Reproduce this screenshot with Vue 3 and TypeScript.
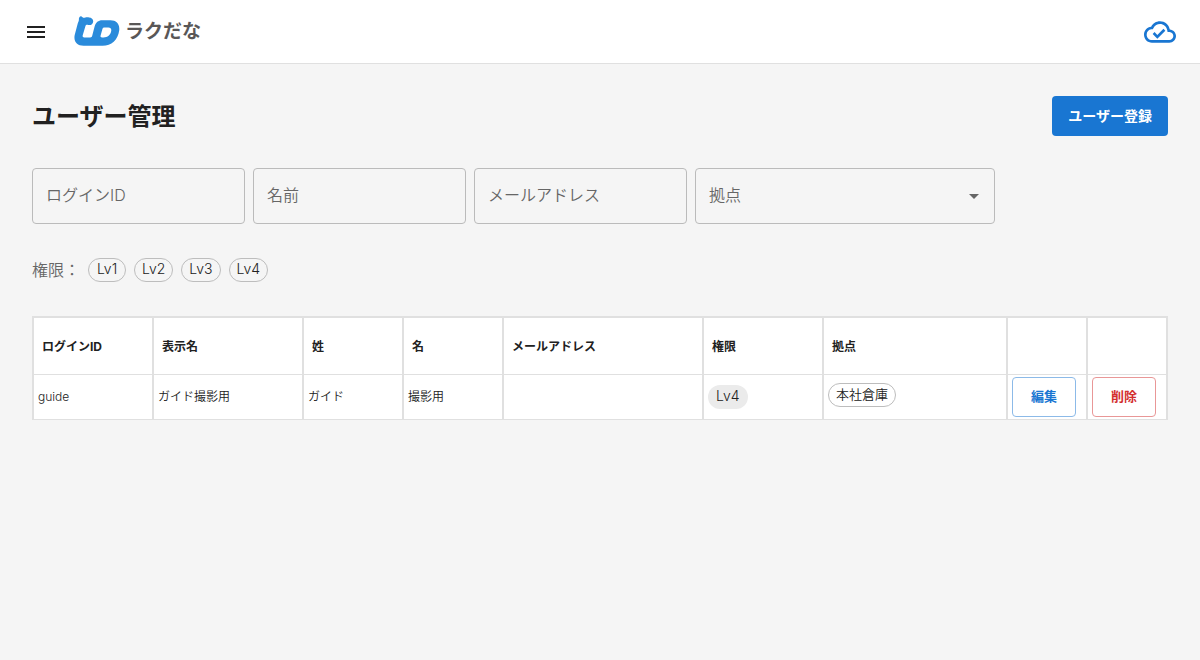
<script setup lang="ts">
import { ref } from 'vue'

interface User {
  loginId: string
  displayName: string
  lastName: string
  firstName: string
  email: string
  level: string
  bases: string[]
}

const textFilters = ref([
  { id: 'login-id', label: 'ログインID', value: '' },
  { id: 'name', label: '名前', value: '' },
  { id: 'email', label: 'メールアドレス', value: '' },
])
const base = ref('')
const levels = ['Lv1', 'Lv2', 'Lv3', 'Lv4']
const selectedLevels = ref<string[]>([])

const columns = [
  { key: 'login', label: 'ログインID' },
  { key: 'display', label: '表示名' },
  { key: 'last', label: '姓' },
  { key: 'first', label: '名' },
  { key: 'email', label: 'メールアドレス' },
  { key: 'level', label: '権限' },
  { key: 'base', label: '拠点' },
  { key: 'edit', label: '' },
  { key: 'delete', label: '' },
]

const users: User[] = [
  {
    loginId: 'guide',
    displayName: 'ガイド撮影用',
    lastName: 'ガイド',
    firstName: '撮影用',
    email: '',
    level: 'Lv4',
    bases: ['本社倉庫'],
  },
]

function toggleLevel(level: string) {
  selectedLevels.value = selectedLevels.value.includes(level)
    ? selectedLevels.value.filter((l) => l !== level)
    : [...selectedLevels.value, level]
}
</script>

<template>
  <div class="page">
    <header class="app-bar">
      <button class="icon-button" type="button" aria-label="メニュー">
        <svg class="menu-icon" viewBox="0 0 24 24"><path d="M3 18h18v-2H3v2zm0-5h18v-2H3v2zm0-7v2h18V6H3z" /></svg>
      </button>
      <a class="brand" href="#">
        <svg class="brand-mark" viewBox="0 0 46 32">
          <path
            fill-rule="evenodd"
            d="M5.4 1.2C6 .1 7.4 -.1 8.3 .9C9 1.6 9.6 1.9 10.6 1.7C12 1.4 13.6 1.3 15 1.4C17.6 1.5 19.3 3.2 19.2 5.4C19 8 16.6 9.6 14.2 8.9C12.6 8.5 11.8 9 11.4 10.2L8.8 19C8.3 20.6 8.8 21.4 10.2 21.4H16.2C17.4 21.4 17.9 21 18.2 19.8L20.6 10.6C21.8 6.4 24.2 4.3 28.2 4.3H36.4C42.6 4.3 46 8.4 45.2 14.4C44 23.6 37.4 29.8 28.6 29.8H9.6C2.8 29.8 -.6 25.4 .7 19L3.6 8C4.1 6.2 4.9 5 4.9 3.8C4.9 2.8 4.8 2 5.4 1.2ZM30.6 11.6C29.2 11.6 28.6 12.1 28.3 13.4L26.6 19.6C26.3 21 26.7 21.4 28 21.4H29.6C33.6 21.4 36.5 19 37.2 15C37.6 12.8 36.6 11.6 34.4 11.6Z"
          />
        </svg>
        <span class="brand-name">ラクだな</span>
      </a>
      <button class="icon-button sync" type="button" aria-label="同期済み">
        <svg class="cloud-icon" viewBox="0 0 24 24">
          <path d="M19.35 10.04C18.67 6.59 15.64 4 12 4 9.11 4 6.6 5.64 5.35 8.04 2.34 8.36 0 10.91 0 14c0 3.31 2.69 6 6 6h13c2.76 0 5-2.24 5-5 0-2.64-2.05-4.78-4.65-4.96zM19 18H6c-2.21 0-4-1.79-4-4 0-2.05 1.53-3.76 3.56-3.97l1.07-.11.5-.95C8.08 7.14 9.94 6 12 6c2.62 0 4.88 1.86 5.39 4.43l.3 1.5 1.53.11c1.56.1 2.78 1.41 2.78 2.96 0 1.65-1.35 3-3 3zm-9-3.82l-2.09-2.09L6.5 13.5 10 17l6.01-6.01-1.41-1.41z" />
        </svg>
      </button>
    </header>

    <main class="content">
      <div class="title-row">
        <h1>ユーザー管理</h1>
        <button class="primary" type="button">ユーザー登録</button>
      </div>

      <form class="filters" @submit.prevent>
        <input
          v-for="f in textFilters"
          :id="f.id"
          :key="f.id"
          v-model="f.value"
          class="field"
          type="text"
          :aria-label="f.label"
          :placeholder="f.label"
        />
        <div class="select-wrap">
          <select id="base" v-model="base" class="field" aria-label="拠点">
            <option value="">拠点</option>
            <option value="head">本社倉庫</option>
          </select>
          <svg class="arrow" viewBox="0 0 24 24"><path d="M7 10l5 5 5-5z" /></svg>
        </div>
      </form>

      <div class="levels" role="group" aria-labelledby="level-label">
        <span id="level-label" class="level-label">権限：</span>
        <button
          v-for="l in levels"
          :key="l"
          class="chip level outlined"
          :class="{ filled: selectedLevels.includes(l) }"
          type="button"
          :aria-pressed="selectedLevels.includes(l)"
          @click="toggleLevel(l)"
        >{{ l }}</button>
      </div>

      <table>
        <colgroup>
          <col v-for="c in columns" :key="c.key" :class="'col-' + c.key" />
        </colgroup>
        <thead>
          <tr>
            <th v-for="c in columns" :key="c.key" scope="col">{{ c.label }}</th>
          </tr>
        </thead>
        <tbody>
          <tr v-for="u in users" :key="u.loginId">
            <td>{{ u.loginId }}</td>
            <td>{{ u.displayName }}</td>
            <td>{{ u.lastName }}</td>
            <td>{{ u.firstName }}</td>
            <td>{{ u.email }}</td>
            <td><div class="chips"><span class="chip level filled">{{ u.level }}</span></div></td>
            <td>
              <div class="chips bases">
                <span v-for="b in u.bases" :key="b" class="chip outlined">{{ b }}</span>
              </div>
            </td>
            <td><button class="action edit" type="button">編集</button></td>
            <td><button class="action delete" type="button">削除</button></td>
          </tr>
        </tbody>
      </table>
    </main>
  </div>
</template>

<style>
body {
  background: #f5f5f5;
}
</style>

<style scoped>
.page {
  min-height: 100vh;
  background: #f5f5f5;
  color: #212121;
  font-family: Inter, "Noto Sans CJK JP", sans-serif;
  font-size: 16px;
  font-weight: 350;
}
.page *,
.page {
  box-sizing: border-box;
}
button,
input,
select {
  font: inherit;
  color: inherit;
}
button {
  cursor: pointer;
}
svg {
  display: block;
  fill: currentColor;
}
.app-bar {
  display: flex;
  align-items: center;
  min-height: 64px;
  padding: 0 24px;
  background: #fff;
  border-bottom: 1px solid #e0e0e0;
}
.icon-button {
  padding: 0;
  border: 0;
  background: none;
}
.menu-icon {
  width: 24px;
  height: 24px;
}
.brand {
  display: flex;
  align-items: center;
  gap: 5px;
  margin-left: 26px;
  color: #595757;
  text-decoration: none;
}
.brand-mark {
  width: 46px;
  height: 32px;
  color: #2a8bdb;
}
.brand-name {
  font-size: 19px;
  font-weight: 700;
  line-height: 24px;
}
.sync {
  margin-left: auto;
  color: #1976d2;
}
.cloud-icon {
  width: 32px;
  height: 32px;
}
.content {
  display: flex;
  flex-direction: column;
  gap: 32px;
  padding: 32px;
}
.title-row {
  display: flex;
  align-items: center;
  justify-content: space-between;
}
h1 {
  margin: 0;
  padding-top: 2px;
  font-size: 24px;
  font-weight: 700;
  line-height: 32px;
}
.primary {
  height: 40px;
  padding: 0 16px 2px;
  border: 0;
  border-radius: 4px;
  background: #1976d2;
  color: #fff;
  font-size: 14px;
  font-weight: 700;
}
.filters {
  display: flex;
  flex-wrap: wrap;
  gap: 8px;
}
.field {
  width: 213px;
  height: 56px;
  padding: 0 13px 2px;
  border: 1px solid #bbb;
  border-radius: 4px;
  background: transparent;
  color: #666;
  line-height: 24px;
}
.field::placeholder {
  color: #666;
  opacity: 1;
}
.select-wrap {
  position: relative;
  width: 300px;
}
.select-wrap .field {
  width: 100%;
  appearance: none;
}
.arrow {
  position: absolute;
  top: 16px;
  right: 9px;
  width: 24px;
  height: 24px;
  color: #666;
  pointer-events: none;
}
.levels {
  display: flex;
  align-items: center;
  gap: 8px;
  min-height: 28px;
}
.level-label {
  color: #666;
  line-height: 24px;
}
.chip {
  display: inline-flex;
  align-items: center;
  justify-content: center;
  height: 24px;
  padding: 0 7px 2px;
  border: 1px solid transparent;
  border-radius: 12px;
  background: none;
  font-size: 13px;
  line-height: 20px;
}
.chip.level {
  min-width: 38px;
  font-size: 14px;
}
.chip.outlined {
  border-color: #bdbdbd;
}
.chip.filled {
  background: #ebebeb;
}
.chips {
  display: flex;
  flex-wrap: wrap;
  gap: 4px;
}
.bases {
  margin-bottom: 4px;
}
table {
  width: 100%;
  table-layout: fixed;
  border: solid #e0e0e0;
  border-width: 2px 0 0 2px;
  border-collapse: separate;
  border-spacing: 0;
  background: #fff;
  font-size: 12px;
  line-height: 20px;
}
th,
td {
  border: solid #e0e0e0;
  border-width: 0 2px 1px 0;
  text-align: left;
  vertical-align: middle;
}
th {
  height: 57px;
  padding: 2px 8px 0;
  font-weight: 700;
}
td {
  height: 45px;
  padding: 2px 4px;
}
.col-login,
.col-level {
  width: 120px;
}
.col-display {
  width: 150px;
}
.col-last,
.col-first {
  width: 100px;
}
.col-email {
  width: 200px;
}
.col-edit,
.col-delete {
  width: 80px;
}
.action {
  display: block;
  width: 64px;
  height: 40px;
  padding: 0 0 2px;
  border: 1px solid;
  border-radius: 4px;
  background: #fff;
  font-size: 13px;
  font-weight: 700;
}
.edit {
  border-color: #8cbae8;
  color: #1976d2;
}
.delete {
  border-color: #e99797;
  color: #d32f2f;
}
</style>
